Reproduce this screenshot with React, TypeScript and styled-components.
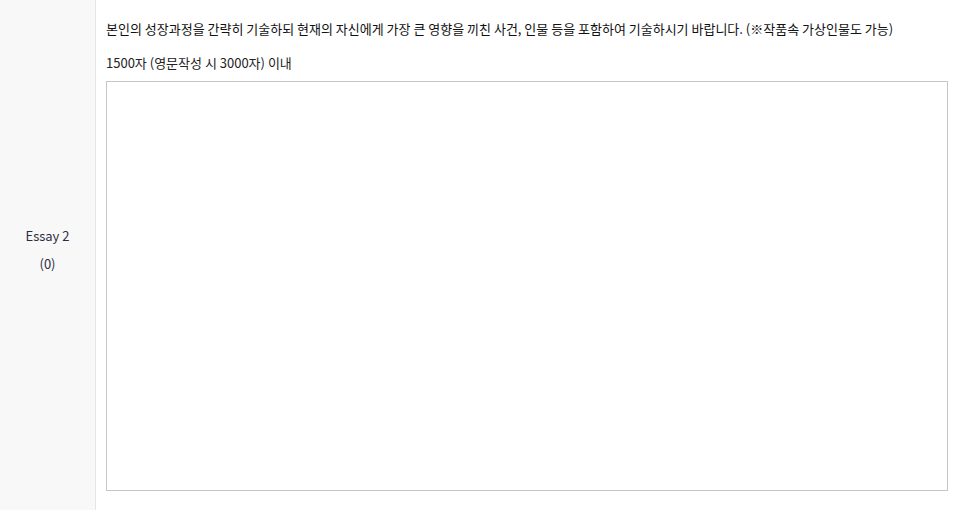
import React from 'react'
import styled, { createGlobalStyle } from 'styled-components'

const GlobalStyle = createGlobalStyle`
  html, body {
    margin: 0;
    padding: 0;
    background: #fff;
  }
  body {
    font-family: "Noto Sans CJK KR", "Noto Sans", sans-serif;
    color: #222;
  }
`

const Row = styled.div`
  display: flex;
  width: 959px;
  min-height: 510px;
`

const HeadCell = styled.div`
  width: 96px;
  flex-shrink: 0;
  background: #f8f8f8;
  border-right: 1px solid #e6e6e6;
  display: flex;
  flex-direction: column;
  align-items: center;
  justify-content: center;
  gap: 6px;
  font-size: 13px;
  color: #2c2c3e;
  padding-bottom: 10px;
  box-sizing: border-box;
`

const HeadLine = styled.span`
  line-height: 22px;
`

const BodyCell = styled.div`
  flex: 1;
  padding: 18px 11px 19px 10px;
  display: flex;
  flex-direction: column;
`

const Question = styled.p`
  margin: 0 0 12px;
  font-size: 13px;
  line-height: 22px;
  color: #111;
`

const Limit = styled.p`
  margin: 0 0 7px;
  font-size: 13px;
  line-height: 22px;
  color: #222;
`

const Answer = styled.textarea`
  display: block;
  width: 100%;
  height: 410px;
  box-sizing: border-box;
  border: 1px solid #c6c6c6;
  resize: none;
  outline: none;
  padding: 8px;
  font-family: inherit;
  font-size: 13px;
  background: #fff;
`

export default function App() {
  return (
    <>
      <GlobalStyle />
      <Row>
        <HeadCell>
          <HeadLine>Essay 2</HeadLine>
          <HeadLine>(0)</HeadLine>
        </HeadCell>
        <BodyCell>
          <Question>
            본인의 성장과정을 간략히 기술하되 현재의 자신에게 가장 큰 영향을 끼친 사건, 인물 등을 포함하여 기술하시기 바랍니다. (※작품속 가상인물도 가능)
          </Question>
          <Limit>1500자 (영문작성 시 3000자) 이내</Limit>
          <Answer />
        </BodyCell>
      </Row>
    </>
  )
}
